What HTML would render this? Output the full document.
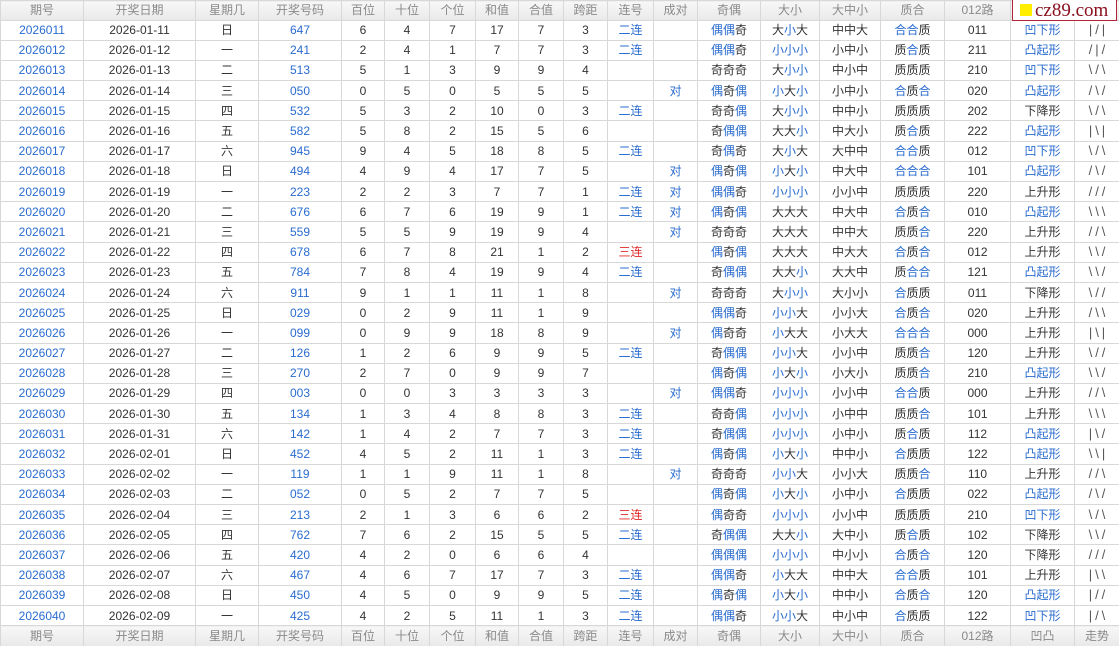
<!DOCTYPE html>
<html><head><meta charset="utf-8"><style>
html,body{margin:0;padding:0;background:#fff;width:1119px;height:646px;overflow:hidden}
table{border-collapse:collapse;table-layout:fixed;width:1119px;font-family:"Liberation Sans","Noto Sans CJK SC",sans-serif;font-size:12px;color:#333}
td{border:1px solid #d8d8d8;text-align:center;padding:0;height:19.2px;line-height:18px;white-space:nowrap;overflow:hidden}
tr.h td{background:linear-gradient(#f7f7f7,#e9e9e9);color:#8a8a8a;height:18.5px}
tr.f td{height:19.5px}
.b,i{color:#2a6ccf;font-style:normal}
.r{color:#e02a2a}
.zs{color:#555;letter-spacing:3px;font-size:13px;text-indent:3px}
#logo{position:absolute;left:1012px;top:0;width:105px;height:21px;background:#fff;border:1px solid #b0243a;border-top:none;font-family:"Liberation Serif",serif;font-size:19px;color:#8a1020;line-height:21px;box-sizing:border-box;padding-left:22px}
#logo:before{content:"";position:absolute;left:7px;top:4px;width:12px;height:12px;background:#ffee00}
</style></head><body>
<div id="logo">cz89.com</div>
<table>
<colgroup><col style="width:83px"><col style="width:112px"><col style="width:63px"><col style="width:83px"><col style="width:43px"><col style="width:45px"><col style="width:46px"><col style="width:43px"><col style="width:45px"><col style="width:44px"><col style="width:46px"><col style="width:44px"><col style="width:63px"><col style="width:59px"><col style="width:61px"><col style="width:64px"><col style="width:66px"><col style="width:64px"><col style="width:45px"></colgroup>
<tr class="h"><td>期号</td><td>开奖日期</td><td>星期几</td><td>开奖号码</td><td>百位</td><td>十位</td><td>个位</td><td>和值</td><td>合值</td><td>跨距</td><td>连号</td><td>成对</td><td>奇偶</td><td>大小</td><td>大中小</td><td>质合</td><td>012路</td><td>凹凸</td><td>走势</td></tr>
<tr><td class="b">2026011</td><td>2026-01-11</td><td>日</td><td class="b">647</td><td>6</td><td>4</td><td>7</td><td>17</td><td>7</td><td>3</td><td class="b">二连</td><td></td><td><i>偶偶</i>奇</td><td>大<i>小</i>大</td><td>中中大</td><td><i>合合</i>质</td><td>011</td><td class="b">凹下形</td><td class="zs">|/|</td></tr>
<tr><td class="b">2026012</td><td>2026-01-12</td><td>一</td><td class="b">241</td><td>2</td><td>4</td><td>1</td><td>7</td><td>7</td><td>3</td><td class="b">二连</td><td></td><td><i>偶偶</i>奇</td><td><i>小小小</i></td><td>小中小</td><td>质<i>合</i>质</td><td>211</td><td class="b">凸起形</td><td class="zs">/|/</td></tr>
<tr><td class="b">2026013</td><td>2026-01-13</td><td>二</td><td class="b">513</td><td>5</td><td>1</td><td>3</td><td>9</td><td>9</td><td>4</td><td></td><td></td><td>奇奇奇</td><td>大<i>小小</i></td><td>中小中</td><td>质质质</td><td>210</td><td class="b">凹下形</td><td class="zs">\/\</td></tr>
<tr><td class="b">2026014</td><td>2026-01-14</td><td>三</td><td class="b">050</td><td>0</td><td>5</td><td>0</td><td>5</td><td>5</td><td>5</td><td></td><td class="b">对</td><td><i>偶</i>奇<i>偶</i></td><td><i>小</i>大<i>小</i></td><td>小中小</td><td><i>合</i>质<i>合</i></td><td>020</td><td class="b">凸起形</td><td class="zs">/\/</td></tr>
<tr><td class="b">2026015</td><td>2026-01-15</td><td>四</td><td class="b">532</td><td>5</td><td>3</td><td>2</td><td>10</td><td>0</td><td>3</td><td class="b">二连</td><td></td><td>奇奇<i>偶</i></td><td>大<i>小小</i></td><td>中中小</td><td>质质质</td><td>202</td><td>下降形</td><td class="zs">\/\</td></tr>
<tr><td class="b">2026016</td><td>2026-01-16</td><td>五</td><td class="b">582</td><td>5</td><td>8</td><td>2</td><td>15</td><td>5</td><td>6</td><td></td><td></td><td>奇<i>偶偶</i></td><td>大大<i>小</i></td><td>中大小</td><td>质<i>合</i>质</td><td>222</td><td class="b">凸起形</td><td class="zs">|\|</td></tr>
<tr><td class="b">2026017</td><td>2026-01-17</td><td>六</td><td class="b">945</td><td>9</td><td>4</td><td>5</td><td>18</td><td>8</td><td>5</td><td class="b">二连</td><td></td><td>奇<i>偶</i>奇</td><td>大<i>小</i>大</td><td>大中中</td><td><i>合合</i>质</td><td>012</td><td class="b">凹下形</td><td class="zs">\/\</td></tr>
<tr><td class="b">2026018</td><td>2026-01-18</td><td>日</td><td class="b">494</td><td>4</td><td>9</td><td>4</td><td>17</td><td>7</td><td>5</td><td></td><td class="b">对</td><td><i>偶</i>奇<i>偶</i></td><td><i>小</i>大<i>小</i></td><td>中大中</td><td><i>合合合</i></td><td>101</td><td class="b">凸起形</td><td class="zs">/\/</td></tr>
<tr><td class="b">2026019</td><td>2026-01-19</td><td>一</td><td class="b">223</td><td>2</td><td>2</td><td>3</td><td>7</td><td>7</td><td>1</td><td class="b">二连</td><td class="b">对</td><td><i>偶偶</i>奇</td><td><i>小小小</i></td><td>小小中</td><td>质质质</td><td>220</td><td>上升形</td><td class="zs">///</td></tr>
<tr><td class="b">2026020</td><td>2026-01-20</td><td>二</td><td class="b">676</td><td>6</td><td>7</td><td>6</td><td>19</td><td>9</td><td>1</td><td class="b">二连</td><td class="b">对</td><td><i>偶</i>奇<i>偶</i></td><td>大大大</td><td>中大中</td><td><i>合</i>质<i>合</i></td><td>010</td><td class="b">凸起形</td><td class="zs">\\\</td></tr>
<tr><td class="b">2026021</td><td>2026-01-21</td><td>三</td><td class="b">559</td><td>5</td><td>5</td><td>9</td><td>19</td><td>9</td><td>4</td><td></td><td class="b">对</td><td>奇奇奇</td><td>大大大</td><td>中中大</td><td>质质<i>合</i></td><td>220</td><td>上升形</td><td class="zs">//\</td></tr>
<tr><td class="b">2026022</td><td>2026-01-22</td><td>四</td><td class="b">678</td><td>6</td><td>7</td><td>8</td><td>21</td><td>1</td><td>2</td><td class="r">三连</td><td></td><td><i>偶</i>奇<i>偶</i></td><td>大大大</td><td>中大大</td><td><i>合</i>质<i>合</i></td><td>012</td><td>上升形</td><td class="zs">\\/</td></tr>
<tr><td class="b">2026023</td><td>2026-01-23</td><td>五</td><td class="b">784</td><td>7</td><td>8</td><td>4</td><td>19</td><td>9</td><td>4</td><td class="b">二连</td><td></td><td>奇<i>偶偶</i></td><td>大大<i>小</i></td><td>大大中</td><td>质<i>合合</i></td><td>121</td><td class="b">凸起形</td><td class="zs">\\/</td></tr>
<tr><td class="b">2026024</td><td>2026-01-24</td><td>六</td><td class="b">911</td><td>9</td><td>1</td><td>1</td><td>11</td><td>1</td><td>8</td><td></td><td class="b">对</td><td>奇奇奇</td><td>大<i>小小</i></td><td>大小小</td><td><i>合</i>质质</td><td>011</td><td>下降形</td><td class="zs">\//</td></tr>
<tr><td class="b">2026025</td><td>2026-01-25</td><td>日</td><td class="b">029</td><td>0</td><td>2</td><td>9</td><td>11</td><td>1</td><td>9</td><td></td><td></td><td><i>偶偶</i>奇</td><td><i>小小</i>大</td><td>小小大</td><td><i>合</i>质<i>合</i></td><td>020</td><td>上升形</td><td class="zs">/\\</td></tr>
<tr><td class="b">2026026</td><td>2026-01-26</td><td>一</td><td class="b">099</td><td>0</td><td>9</td><td>9</td><td>18</td><td>8</td><td>9</td><td></td><td class="b">对</td><td><i>偶</i>奇奇</td><td><i>小</i>大大</td><td>小大大</td><td><i>合合合</i></td><td>000</td><td>上升形</td><td class="zs">|\|</td></tr>
<tr><td class="b">2026027</td><td>2026-01-27</td><td>二</td><td class="b">126</td><td>1</td><td>2</td><td>6</td><td>9</td><td>9</td><td>5</td><td class="b">二连</td><td></td><td>奇<i>偶偶</i></td><td><i>小小</i>大</td><td>小小中</td><td>质质<i>合</i></td><td>120</td><td>上升形</td><td class="zs">\//</td></tr>
<tr><td class="b">2026028</td><td>2026-01-28</td><td>三</td><td class="b">270</td><td>2</td><td>7</td><td>0</td><td>9</td><td>9</td><td>7</td><td></td><td></td><td><i>偶</i>奇<i>偶</i></td><td><i>小</i>大<i>小</i></td><td>小大小</td><td>质质<i>合</i></td><td>210</td><td class="b">凸起形</td><td class="zs">\\/</td></tr>
<tr><td class="b">2026029</td><td>2026-01-29</td><td>四</td><td class="b">003</td><td>0</td><td>0</td><td>3</td><td>3</td><td>3</td><td>3</td><td></td><td class="b">对</td><td><i>偶偶</i>奇</td><td><i>小小小</i></td><td>小小中</td><td><i>合合</i>质</td><td>000</td><td>上升形</td><td class="zs">//\</td></tr>
<tr><td class="b">2026030</td><td>2026-01-30</td><td>五</td><td class="b">134</td><td>1</td><td>3</td><td>4</td><td>8</td><td>8</td><td>3</td><td class="b">二连</td><td></td><td>奇奇<i>偶</i></td><td><i>小小小</i></td><td>小中中</td><td>质质<i>合</i></td><td>101</td><td>上升形</td><td class="zs">\\\</td></tr>
<tr><td class="b">2026031</td><td>2026-01-31</td><td>六</td><td class="b">142</td><td>1</td><td>4</td><td>2</td><td>7</td><td>7</td><td>3</td><td class="b">二连</td><td></td><td>奇<i>偶偶</i></td><td><i>小小小</i></td><td>小中小</td><td>质<i>合</i>质</td><td>112</td><td class="b">凸起形</td><td class="zs">|\/</td></tr>
<tr><td class="b">2026032</td><td>2026-02-01</td><td>日</td><td class="b">452</td><td>4</td><td>5</td><td>2</td><td>11</td><td>1</td><td>3</td><td class="b">二连</td><td></td><td><i>偶</i>奇<i>偶</i></td><td><i>小</i>大<i>小</i></td><td>中中小</td><td><i>合</i>质质</td><td>122</td><td class="b">凸起形</td><td class="zs">\\|</td></tr>
<tr><td class="b">2026033</td><td>2026-02-02</td><td>一</td><td class="b">119</td><td>1</td><td>1</td><td>9</td><td>11</td><td>1</td><td>8</td><td></td><td class="b">对</td><td>奇奇奇</td><td><i>小小</i>大</td><td>小小大</td><td>质质<i>合</i></td><td>110</td><td>上升形</td><td class="zs">//\</td></tr>
<tr><td class="b">2026034</td><td>2026-02-03</td><td>二</td><td class="b">052</td><td>0</td><td>5</td><td>2</td><td>7</td><td>7</td><td>5</td><td></td><td></td><td><i>偶</i>奇<i>偶</i></td><td><i>小</i>大<i>小</i></td><td>小中小</td><td><i>合</i>质质</td><td>022</td><td class="b">凸起形</td><td class="zs">/\/</td></tr>
<tr><td class="b">2026035</td><td>2026-02-04</td><td>三</td><td class="b">213</td><td>2</td><td>1</td><td>3</td><td>6</td><td>6</td><td>2</td><td class="r">三连</td><td></td><td><i>偶</i>奇奇</td><td><i>小小小</i></td><td>小小中</td><td>质质质</td><td>210</td><td class="b">凹下形</td><td class="zs">\/\</td></tr>
<tr><td class="b">2026036</td><td>2026-02-05</td><td>四</td><td class="b">762</td><td>7</td><td>6</td><td>2</td><td>15</td><td>5</td><td>5</td><td class="b">二连</td><td></td><td>奇<i>偶偶</i></td><td>大大<i>小</i></td><td>大中小</td><td>质<i>合</i>质</td><td>102</td><td>下降形</td><td class="zs">\\/</td></tr>
<tr><td class="b">2026037</td><td>2026-02-06</td><td>五</td><td class="b">420</td><td>4</td><td>2</td><td>0</td><td>6</td><td>6</td><td>4</td><td></td><td></td><td><i>偶偶偶</i></td><td><i>小小小</i></td><td>中小小</td><td><i>合</i>质<i>合</i></td><td>120</td><td>下降形</td><td class="zs">///</td></tr>
<tr><td class="b">2026038</td><td>2026-02-07</td><td>六</td><td class="b">467</td><td>4</td><td>6</td><td>7</td><td>17</td><td>7</td><td>3</td><td class="b">二连</td><td></td><td><i>偶偶</i>奇</td><td><i>小</i>大大</td><td>中中大</td><td><i>合合</i>质</td><td>101</td><td>上升形</td><td class="zs">|\\</td></tr>
<tr><td class="b">2026039</td><td>2026-02-08</td><td>日</td><td class="b">450</td><td>4</td><td>5</td><td>0</td><td>9</td><td>9</td><td>5</td><td class="b">二连</td><td></td><td><i>偶</i>奇<i>偶</i></td><td><i>小</i>大<i>小</i></td><td>中中小</td><td><i>合</i>质<i>合</i></td><td>120</td><td class="b">凸起形</td><td class="zs">|//</td></tr>
<tr><td class="b">2026040</td><td>2026-02-09</td><td>一</td><td class="b">425</td><td>4</td><td>2</td><td>5</td><td>11</td><td>1</td><td>3</td><td class="b">二连</td><td></td><td><i>偶偶</i>奇</td><td><i>小小</i>大</td><td>中小中</td><td><i>合</i>质质</td><td>122</td><td class="b">凹下形</td><td class="zs">|/\</td></tr>
<tr class="h f"><td>期号</td><td>开奖日期</td><td>星期几</td><td>开奖号码</td><td>百位</td><td>十位</td><td>个位</td><td>和值</td><td>合值</td><td>跨距</td><td>连号</td><td>成对</td><td>奇偶</td><td>大小</td><td>大中小</td><td>质合</td><td>012路</td><td>凹凸</td><td>走势</td></tr>
</table>
</body></html>
